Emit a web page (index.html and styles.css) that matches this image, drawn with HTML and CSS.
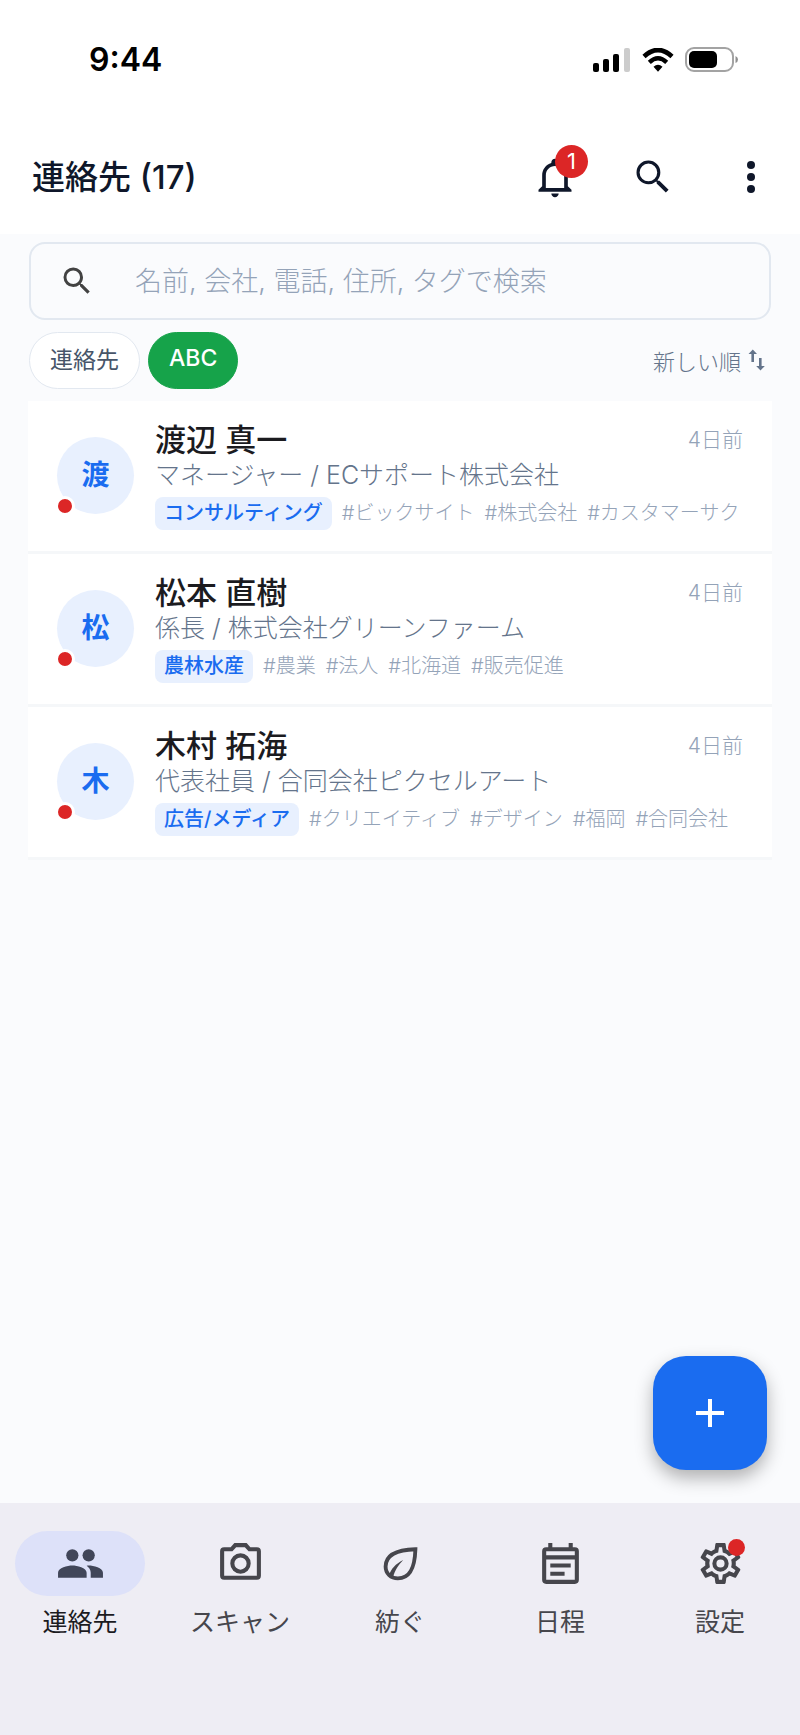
FILE: index.html
```html
<!DOCTYPE html>
<html lang="ja">
<head>
    <meta charset="UTF-8">
    <meta name="viewport" content="width=device-width, initial-scale=1.0">
    <title>連絡先</title>
    <link rel="stylesheet" href="styles.css">
</head>
<body>

<div class="status-bar">
    <span class="time">9:44</span>
    <div class="status-icons">
        <svg width="38" height="24" viewBox="0 0 38 24">
            <rect x="0" y="15" width="6" height="9" rx="2"/>
            <rect x="10" y="11" width="6" height="13" rx="2"/>
            <rect x="20" y="6" width="6" height="18" rx="2"/>
            <rect x="31" y="0" width="6" height="24" rx="2" fill="#ccc"/>
        </svg>
        <svg width="32" height="24" viewBox="0 0 32 24">
            <path d="M2 8.500 Q16 -4.500 30 8.500" fill="none" stroke="#000" stroke-width="4.600"/>
            <path d="M7.300 14.300 Q16 6.200 24.700 14.300" fill="none" stroke="#000" stroke-width="4.400"/>
            <path d="M11.500 18.800 Q16 14.800 20.500 18.800 L16 23.800 Z"/>
        </svg>
        <svg width="54" height="25" viewBox="0 0 54 25">
            <rect x="1" y="1" width="47" height="23" rx="8" fill="none" stroke="#a3a3a3" stroke-width="2"/>
            <rect x="4" y="4" width="28" height="17" rx="5"/>
            <path d="M50.500 9 Q53 10 53 12.500 Q53 15 50.500 16 Z" fill="#8f8f8f"/>
        </svg>
    </div>
</div>

<header class="app-bar">
    <h1>連絡先 (17)</h1>
    <div class="actions">
        <button type="button" class="icon-button" aria-label="通知">
            <svg width="44" height="44" viewBox="0 0 24 24"><path d="M10 21h4c0 1.100-.9 2-2 2s-2-.9-2-2m11-2v1H3v-1l2-2v-6c0-3.100 2-5.800 5-6.700V4c0-1.100.9-2 2-2s2 .9 2 2v.3c3 .9 5 3.600 5 6.700v6zm-4-8c0-2.800-2.200-5-5-5s-5 2.200-5 5v7h10z"/></svg>
            <span class="count">1</span>
        </button>
        <button type="button" class="icon-button" aria-label="検索">
            <svg width="44" height="44" viewBox="0 0 24 24"><path d="M9.500 3A6.500 6.500 0 0 1 16 9.500c0 1.610-.59 3.090-1.560 4.230l.27.27h.79l5 5l-1.500 1.500l-5-5v-.79l-.27-.27A6.520 6.520 0 0 1 9.500 16A6.500 6.500 0 0 1 3 9.500A6.500 6.500 0 0 1 9.500 3m0 1.700a4.800 4.800 0 1 0 0 9.600a4.800 4.800 0 1 0 0-9.600"/></svg>
        </button>
        <button type="button" class="icon-button" aria-label="メニュー">
            <svg width="48" height="48" viewBox="0 0 24 24"><circle cx="12" cy="6" r="2"/><circle cx="12" cy="12" r="2"/><circle cx="12" cy="18" r="2"/></svg>
        </button>
    </div>
</header>

<main class="content">
    <div class="search">
        <label for="search" aria-label="検索">
            <svg width="36" height="36" viewBox="0 0 24 24"><path d="M9.500 3A6.500 6.500 0 0 1 16 9.500c0 1.610-.59 3.090-1.560 4.230l.27.27h.79l5 5l-1.500 1.500l-5-5v-.79l-.27-.27A6.520 6.520 0 0 1 9.500 16A6.500 6.500 0 0 1 3 9.500A6.500 6.500 0 0 1 9.500 3m0 2C7 5 5 7 5 9.500S7 14 9.500 14S14 12 14 9.500S12 5 9.500 5"/></svg>
        </label>
        <input type="text" id="search" placeholder="名前, 会社, 電話, 住所, タグで検索">
    </div>

    <div class="filters">
        <button type="button" class="chip">連絡先</button>
        <button type="button" class="chip active">ABC</button>
        <button type="button" class="sort">
            新しい順
            <svg width="18" height="22" viewBox="0 0 18 22"><path d="M3.400 13V5H0.500L4.800 0.500L9 5H6v8zM11 9v8H8.200l4.300 4.500L16.800 17h-3.200V9z"/></svg>
        </button>
    </div>

    <ul class="contacts">
        <li class="contact">
            <div class="avatar">渡<span class="unread"></span></div>
            <div class="info">
                <div class="top"><h2>渡辺 真一</h2><time>4日前</time></div>
                <p class="company">マネージャー / ECサポート株式会社</p>
                <p class="tags"><span class="category">コンサルティング</span><span>#ビックサイト</span><span>#株式会社</span><span>#カスタマーサク</span></p>
            </div>
        </li>
        <li class="contact">
            <div class="avatar">松<span class="unread"></span></div>
            <div class="info">
                <div class="top"><h2>松本 直樹</h2><time>4日前</time></div>
                <p class="company">係長 / 株式会社グリーンファーム</p>
                <p class="tags"><span class="category">農林水産</span><span>#農業</span><span>#法人</span><span>#北海道</span><span>#販売促進</span></p>
            </div>
        </li>
        <li class="contact">
            <div class="avatar">木<span class="unread"></span></div>
            <div class="info">
                <div class="top"><h2>木村 拓海</h2><time>4日前</time></div>
                <p class="company">代表社員 / 合同会社ピクセルアート</p>
                <p class="tags"><span class="category">広告/メディア</span><span>#クリエイティブ</span><span>#デザイン</span><span>#福岡</span><span>#合同会社</span></p>
            </div>
        </li>
    </ul>

    <button type="button" class="fab" aria-label="追加">
        <svg width="48" height="48" viewBox="0 0 48 48"><path d="M22 10h4v12h12v4H26v12h-4V26H10v-4h12z"/></svg>
    </button>
</main>

<nav class="bottom-nav">
    <a href="#contacts" class="current">
        <span class="nav-icon"><svg width="49" height="49" viewBox="0 0 24 24"><circle cx="8" cy="8" r="3"/><circle cx="16" cy="8" r="3"/><path d="M8 13c-2.330 0-7 1.170-7 3.500V19h14v-2.500c0-2.330-4.670-3.500-7-3.500zm8 0c-.29 0-.62.02-.97.05 1.160.84 1.970 1.970 1.970 3.450V19h6v-2.500c0-2.330-4.670-3.500-7-3.500z"/></svg></span>
        連絡先
    </a>
    <a href="#scan">
        <span class="nav-icon"><svg width="49" height="49" viewBox="0 0 24 24"><path d="M20 4h-3.170L15 2H9L7.170 4H4a2 2 0 0 0-2 2v12a2 2 0 0 0 2 2h16a2 2 0 0 0 2-2V6a2 2 0 0 0-2-2m0 14H4V6h4.050l1.830-2h4.240l1.830 2H20zM12 7a5 5 0 1 0 0 10a5 5 0 0 0 0-10m0 8a3 3 0 1 1 0-6a3 3 0 0 1 0 6"/></svg></span>
        スキャン
    </a>
    <a href="#spin">
        <span class="nav-icon"><svg width="49" height="49" viewBox="0 0 24 24"><path d="M19.300 5C9.500 5.300 4.700 8.300 4.700 13.500C4.700 17 7.300 19.300 10.700 19.300C16.500 19.300 19 14.500 19.300 5Z" fill="none" stroke="currentColor" stroke-width="1.900"/><path d="M6.300 17.800C7.500 14.500 9.500 12.300 13.300 10.300C11 12.800 9.300 15 8.300 19Z"/></svg></span>
        紡ぐ
    </a>
    <a href="#schedule">
        <span class="nav-icon"><svg width="49" height="49" viewBox="0 0 24 24"><path d="M19 4h-1V2h-2v2H8V2H6v2H5a2 2 0 0 0-2 2v14a2 2 0 0 0 2 2h14a2 2 0 0 0 2-2V6a2 2 0 0 0-2-2zm0 16H5V10h14zM5 8V6h14v2zm2 4h10v2H7zm0 4h7v2H7z"/></svg></span>
        日程
    </a>
    <a href="#settings">
        <span class="nav-icon"><svg width="49" height="49" viewBox="0 0 24 24"><path d="M12 8a4 4 0 0 1 4 4a4 4 0 0 1-4 4a4 4 0 0 1-4-4a4 4 0 0 1 4-4m0 2a2 2 0 0 0-2 2a2 2 0 0 0 2 2a2 2 0 0 0 2-2a2 2 0 0 0-2-2m-2 12c-.25 0-.46-.18-.5-.42l-.37-2.650c-.63-.25-1.170-.59-1.690-.99l-2.490 1.010c-.22.08-.49 0-.61-.22l-2-3.460a.493.493 0 0 1 .12-.64l2.110-1.660L4.500 12l.07-1l-2.110-1.630a.493.493 0 0 1-.12-.64l2-3.460c.12-.22.39-.31.61-.22l2.490 1c.52-.39 1.060-.73 1.690-.98l.37-2.650c.04-.24.25-.42.5-.42h4c.25 0 .46.18.5.42l.37 2.650c.63.25 1.170.59 1.690.98l2.490-1c.22-.09.49 0 .61.22l2 3.460c.13.22.07.49-.12.64L19.430 11l.07 1l-.07 1l2.110 1.630c.19.15.25.42.12.64l-2 3.460c-.12.22-.39.31-.61.22l-2.490-1c-.52.39-1.060.73-1.690.98l-.37 2.650c-.04.24-.25.42-.5.42zm1.250-18l-.37 2.610c-1.200.25-2.260.89-3.030 1.780L5.440 7.350l-.75 1.300L6.800 10.200a5.550 5.550 0 0 0 0 3.600l-2.120 1.560l.75 1.300l2.430-1.040c.77.88 1.820 1.520 3.010 1.760l.37 2.620h1.520l.37-2.610c1.190-.25 2.240-.89 3.010-1.770l2.430 1.040l.75-1.300l-2.120-1.550c.4-1.170.4-2.440 0-3.610l2.110-1.550l-.75-1.300l-2.410 1.040a5.420 5.420 0 0 0-3.030-1.770L12.750 4z"/></svg><span class="nav-dot"></span></span>
        設定
    </a>
</nav>

</body>
</html>
```
FILE: styles.css
```css
* {
    box-sizing: border-box;
}

body {
    margin: 0;
    min-height: 100vh;
    display: flex;
    flex-direction: column;
    background-color: #fafbfd;
    font-family: Inter, "Noto Sans CJK JP", sans-serif;
}

h1, h2, p, ul {
    margin: 0;
    padding: 0;
}

button {
    border: none;
    font-family: inherit;
    cursor: pointer;
}

svg {
    display: block;
    fill: currentColor;
}

.status-bar {
    display: flex;
    justify-content: space-between;
    align-items: center;
    height: 119px;
    padding: 0 61px 0 89px;
    background-color: #fff;
    color: #000;
}

.time {
    font-size: 32px;
    font-weight: 600;
}

.status-icons {
    display: flex;
    align-items: center;
    gap: 11px;
}

.app-bar {
    display: flex;
    justify-content: space-between;
    align-items: center;
    height: 115px;
    padding: 0 22px 0 32px;
    background-color: #fff;
    color: #0f172a;
}

.app-bar h1 {
    font-size: 33px;
    font-weight: 500;
    line-height: 44px;
}

.actions {
    display: flex;
    gap: 44px;
}

.icon-button {
    position: relative;
    display: flex;
    justify-content: center;
    align-items: center;
    width: 54px;
    height: 54px;
    padding: 0;
    background: none;
    color: inherit;
}

.count {
    position: absolute;
    top: -5px;
    right: -6px;
    width: 33px;
    height: 33px;
    border-radius: 50%;
    background-color: #dc2626;
    color: #fff;
    font-size: 22px;
    line-height: 33px;
    text-align: center;
}

.content {
    position: relative;
    flex: 1;
    padding: 8px 28px;
}

.search {
    display: flex;
    align-items: center;
    height: 78px;
    margin: 0 1px;
    border: 2px solid #e2e8f0;
    border-radius: 16px;
    padding: 0 28px;
    color: #424242;
}

.search input {
    flex: 1;
    min-width: 0;
    margin-left: 40px;
    padding: 0;
    border: none;
    outline: none;
    background: none;
    color: #0f172a;
    font-family: inherit;
    font-size: 27px;
}

.search input::placeholder {
    color: #94a3b8;
    font-weight: 300;
    opacity: 1;
}

.filters {
    display: flex;
    align-items: center;
    gap: 8px;
    margin: 0 1px;
    padding: 12px 0;
}

.chip {
    height: 57px;
    padding: 0 20px 6px;
    border: 1px solid #e2e8f0;
    border-radius: 29px;
    background-color: #fff;
    color: #475569;
    font-size: 23px;
}

.chip.active {
    border-color: #16a34a;
    background-color: #16a34a;
    color: #fff;
    font-weight: 500;
}

.sort {
    display: flex;
    align-items: center;
    gap: 7px;
    margin-left: auto;
    padding: 0 5px 2px 0;
    background: none;
    color: #64748b;
    font-size: 22px;
    font-weight: 300;
}

.contacts {
    list-style: none;
}

.contact {
    display: flex;
    align-items: center;
    gap: 21px;
    padding: 20px 26px 21px 29px;
    border-bottom: 3px solid #f5f7f9;
    background-color: #fff;
}

.avatar {
    position: relative;
    flex: none;
    width: 77px;
    height: 77px;
    border-radius: 50%;
    background-color: #e8f0fe;
    color: #1a6cf0;
    font-size: 28px;
    font-weight: 600;
    line-height: 77px;
    text-align: center;
}

.unread {
    position: absolute;
    left: -2px;
    bottom: -2px;
    width: 20px;
    height: 20px;
    border: 3px solid #fff;
    border-radius: 50%;
    background-color: #dc2626;
}

.info {
    flex: 1;
    min-width: 0;
}

.top {
    display: flex;
    justify-content: space-between;
    align-items: center;
    line-height: 38px;
}

.top h2 {
    color: #1b1b1f;
    font-size: 31px;
    font-weight: 500;
}

.top time {
    padding-right: 3px;
    color: #94a3b8;
    font-size: 21px;
    font-weight: 300;
}

.company {
    color: #64748b;
    font-size: 25px;
    font-weight: 300;
    line-height: 32px;
}

.tags {
    display: flex;
    gap: 10px;
    margin-top: 6px;
    overflow: hidden;
    color: #94a3b8;
    font-size: 20px;
    font-weight: 300;
    line-height: 33px;
    white-space: nowrap;
}

.category {
    padding: 0 9px;
    border-radius: 8px;
    background-color: #e8f0fe;
    color: #1a6cf0;
    font-weight: 500;
}

.fab {
    position: absolute;
    right: 33px;
    bottom: 33px;
    display: flex;
    justify-content: center;
    align-items: center;
    width: 114px;
    height: 114px;
    border-radius: 33px;
    background-color: #1a6cf0;
    color: #fff;
    box-shadow: 0 8px 18px rgba(0, 0, 0, 0.3);
}

.bottom-nav {
    display: grid;
    grid-template-columns: repeat(5, 1fr);
    height: 232px;
    padding-top: 28px;
    background-color: #eeedf4;
}

.bottom-nav a {
    display: flex;
    flex-direction: column;
    align-items: center;
    gap: 10px;
    color: #46464c;
    font-size: 25px;
    font-weight: 400;
    line-height: 32px;
    text-decoration: none;
}

.nav-icon {
    position: relative;
    display: flex;
    justify-content: center;
    align-items: center;
    width: 130px;
    height: 65px;
    border-radius: 33px;
}

.bottom-nav .current {
    color: #1b1b1f;
}

.current .nav-icon {
    background-color: #dde1f9;
    color: #414659;
}

.nav-dot {
    position: absolute;
    top: 8px;
    right: 40px;
    width: 17px;
    height: 17px;
    border-radius: 50%;
    background-color: #dc2626;
}
```
